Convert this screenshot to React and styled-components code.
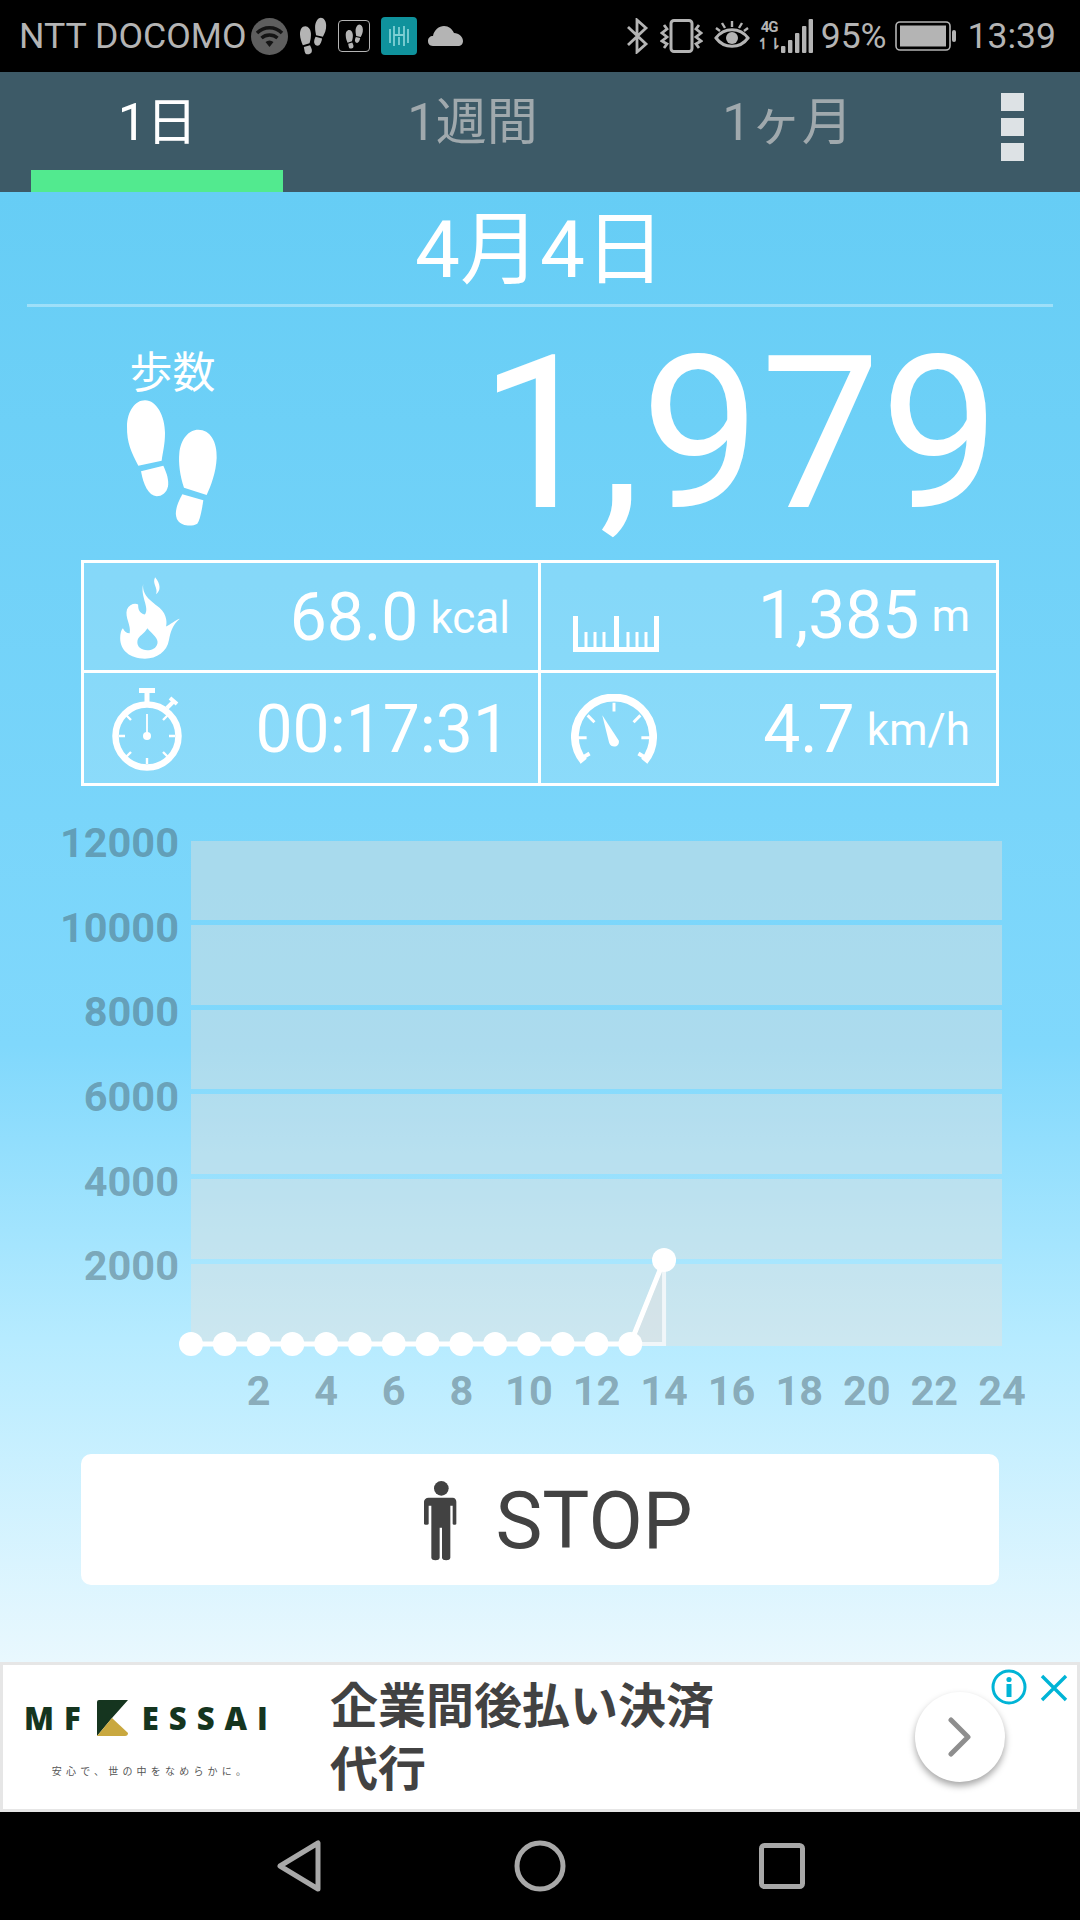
import styled, { createGlobalStyle } from "styled-components";

const GlobalStyle = createGlobalStyle`
  html, body {
    margin: 0;
    padding: 0;
    background: #000;
  }
  body {
    font-family: Roboto, "Noto Sans CJK JP", sans-serif;
  }
`;

const Y_LABELS = [
  { text: "12000", y: 856 },
  { text: "10000", y: 941 },
  { text: "8000", y: 1025 },
  { text: "6000", y: 1110 },
  { text: "4000", y: 1195 },
  { text: "2000", y: 1279 },
];
const GRID_BANDS = [
  { y: 840, h: 79 },
  { y: 924, h: 80 },
  { y: 1009, h: 79 },
  { y: 1093, h: 80 },
  { y: 1178, h: 80 },
  { y: 1263, h: 82 },
];
const HOUR_X = (h) => 191 + h * 33.79;
const X_LABELS = [2, 4, 6, 8, 10, 12, 14, 16, 18, 20, 22, 24];
const FLAT_HOURS = [0, 1, 2, 3, 4, 5, 6, 7, 8, 9, 10, 11, 12, 13];

const App = () => {
  return (
    <Screen>
      <GlobalStyle />
      <StatusBar>
        <Carrier>NTT DOCOMO</Carrier>
        <WifiIcon />
        <FeetIcon size={38} color="#b4b4b4" flip />
        <BoxedFeet>
          <FeetIcon size={25} color="#b4b4b4" flip />
        </BoxedFeet>
        <TealApp />
        <CloudIcon />
        <StatusRight>
          <BluetoothIcon />
          <VibrateIcon />
          <EyeIcon />
          <SignalIcon />
          <BatteryLevel>95%</BatteryLevel>
          <BatteryIcon />
          <StatusText>13:39</StatusText>
        </StatusRight>
      </StatusBar>

      <TabBar>
        <Tab $active>1日</Tab>
        <Tab>1週間</Tab>
        <Tab>1ヶ月</Tab>
        <MenuButton>
          <MenuDot />
          <MenuDot />
          <MenuDot />
        </MenuButton>
      </TabBar>

      <Main>
        <DateTitle>4月4日</DateTitle>
        <StepsRow>
          <StepsLabel>
            <span>歩数</span>
            <FeetIcon size={130} color="#fff" />
          </StepsLabel>
          <StepsCount>1,979</StepsCount>
        </StepsRow>

        <StatsTable>
          <StatCell>
            <FlameIcon />
            <StatValue>
              68.0<StatUnit>kcal</StatUnit>
            </StatValue>
          </StatCell>
          <StatCell $right>
            <RulerIcon />
            <StatValue $up>
              1,385<StatUnit>m</StatUnit>
            </StatValue>
          </StatCell>
          <StatCell $bottom>
            <TimerIcon />
            <StatValue>00:17:31</StatValue>
          </StatCell>
          <StatCell $right $bottom>
            <GaugeIcon />
            <StatValue>
              4.7<StatUnit>km/h</StatUnit>
            </StatValue>
          </StatCell>
        </StatsTable>

        <Chart viewBox="0 810 1080 620">
          {GRID_BANDS.map((b) => (
            <PlotBand key={b.y} x="191" y={b.y} width="811" height={b.h} />
          ))}
          {Y_LABELS.map((l) => (
            <AxisLabel key={l.text} x="179" y={l.y} textAnchor="end">
              {l.text}
            </AxisLabel>
          ))}
          {X_LABELS.map((h) => (
            <AxisLabel key={h} x={HOUR_X(h)} y="1404" textAnchor="middle">
              {h}
            </AxisLabel>
          ))}
          <path
            d={`M${HOUR_X(13)} 1343 L${HOUR_X(14)} 1259 V1343 Z`}
            fill="rgba(225,225,225,.45)"
            stroke="#f0f6f9"
            strokeWidth="4"
          />
          <polyline
            points={`${HOUR_X(0)},1343 ${HOUR_X(13)},1343 ${HOUR_X(14)},1259`}
            fill="none"
            stroke="#fff"
            strokeWidth="5"
          />
          {FLAT_HOURS.map((h) => (
            <circle key={h} cx={HOUR_X(h)} cy="1343" r="12" fill="#fff" />
          ))}
          <circle cx={HOUR_X(14)} cy="1259" r="12" fill="#fff" />
        </Chart>

        <StopButton>
          <PersonIcon />
          STOP
        </StopButton>
      </Main>

      <AdBanner>
        <AdLogo>
          <LogoRow>
            <span>MF</span>
            <KessaiMark />
            <span>ESSAI</span>
          </LogoRow>
          <LogoTagline>安心で、世の中をなめらかに。</LogoTagline>
        </AdLogo>
        <AdHeadline>
          企業間後払い決済
          <br />
          代行
        </AdHeadline>
        <AdInfo>
          <svg width="36" height="36" viewBox="0 0 36 36">
            <circle cx="18" cy="18" r="16" fill="none" stroke="#00b4d6" strokeWidth="3" />
            <circle cx="18" cy="10.5" r="2.6" fill="#00b4d6" />
            <rect x="15.5" y="15" width="5" height="13" fill="#00b4d6" />
          </svg>
        </AdInfo>
        <AdClose>
          <svg width="28" height="28" viewBox="0 0 28 28">
            <path d="M2 2 L26 26 M26 2 L2 26" stroke="#00b4d6" strokeWidth="3.4" fill="none" />
          </svg>
        </AdClose>
        <AdArrow>
          <svg width="24" height="40" viewBox="0 0 24 40">
            <path d="M3 3 L20 20 L3 37" stroke="#8e8e8e" strokeWidth="5" strokeLinecap="round" strokeLinejoin="round" fill="none" />
          </svg>
        </AdArrow>
      </AdBanner>

      <NavBar>
        <svg width="44" height="52" viewBox="0 0 44 52">
          <path d="M3 26 L41 3 V49 Z" fill="none" stroke="#a8a8a8" strokeWidth="5" strokeLinejoin="round" />
        </svg>
        <svg width="52" height="52" viewBox="0 0 52 52">
          <circle cx="26" cy="26" r="23" fill="none" stroke="#a8a8a8" strokeWidth="5" />
        </svg>
        <svg width="46" height="46" viewBox="0 0 46 46">
          <rect x="2.5" y="2.5" width="41" height="41" rx="3" fill="none" stroke="#a8a8a8" strokeWidth="5" />
        </svg>
      </NavBar>
    </Screen>
  );
};

/* drawn icons */

const FeetSvg = styled.svg`
  flex: none;
  transform: ${(p) => (p.$flip ? "scaleX(-1)" : "none")};
`;

const FeetIcon = ({ size, color, flip }) => (
  <FeetSvg $flip={flip} width={size * (285 / 390)} height={size} viewBox="195 205 285 390" fill={color}>
    <path d="M235 408 C215 370 200 340 201 290 C202 245 225 212 255 212 C290 212 315 260 315 310 C315 345 308 370 305 393 Z" />
    <path d="M243 425 L310 408 C320 430 327 450 324 470 C320 490 305 500 290 500 C265 498 250 465 243 425 Z" />
    <path d="M372 474 C360 440 355 400 358 370 C362 330 385 300 415 300 C450 300 472 335 470 385 C468 430 452 470 440 496 Z" />
    <path d="M367 494 L430 512 C425 545 420 570 412 582 C395 592 365 590 352 570 C342 550 350 525 367 494 Z" />
  </FeetSvg>
);

const WifiIcon = () => (
  <svg width="37" height="37" viewBox="0 0 37 37">
    <circle cx="18.5" cy="18.5" r="18.5" fill="#5e5e5e" />
    <path d="M6 15 C13 8 24 8 31 15 M10.5 20 C15 16 22 16 26.5 20" fill="none" stroke="#141414" strokeWidth="3.4" />
    <path d="M14.5 24 C17 22 20 22 22.5 24 L18.5 29 Z" fill="#141414" />
  </svg>
);

const TealApp = () => (
  <svg width="36" height="38" viewBox="0 0 36 38">
    <rect width="36" height="38" rx="4" fill="#0f929c" />
    <path d="M9 12 V26 M13 9 V29 M18 20 V28 M18 10 V17 M23 9 V29 M27 12 V26 M13 18 H23" fill="none" stroke="#7fd0d4" strokeWidth="1.8" />
  </svg>
);

const CloudIcon = () => (
  <svg width="35" height="20" viewBox="0 0 35 20">
    <path
      d="M5 20 C1 20 0 17 0 15 C0 12 2 10 5 10 C6 4 11 0 16 0 C21 0 24 3 26 7 C31 7 35 11 35 15 C35 18 33 20 30 20 Z"
      fill="#b4b4b4"
    />
  </svg>
);

const BluetoothIcon = () => (
  <svg width="23" height="36" viewBox="0 0 23 36">
    <path d="M2 9 L20 26 L11 34 V2 L20 10 L2 27" fill="none" stroke="#b4b4b4" strokeWidth="2.8" />
  </svg>
);

const VibrateIcon = () => (
  <svg width="43" height="34" viewBox="0 0 43 34">
    <rect x="11" y="1.5" width="21" height="31" rx="3" fill="none" stroke="#b4b4b4" strokeWidth="3" />
    <path
      d="M4 6 L7 10 L2 14 L7 18 L2 22 L7 25 L4 29 M39 6 L36 10 L41 14 L36 18 L41 22 L36 25 L39 29"
      fill="none"
      stroke="#b4b4b4"
      strokeWidth="2.8"
    />
  </svg>
);

const EyeIcon = () => (
  <svg width="36" height="32" viewBox="0 0 36 32">
    <path d="M2 18 C10 7 26 7 34 18 C26 29 10 29 2 18 Z" fill="none" stroke="#b4b4b4" strokeWidth="3" />
    <circle cx="18" cy="18" r="6" fill="#b4b4b4" />
    <path d="M18 1 V7 M8 3 L11 8 M28 3 L25 8 M2 8 L6 11 M34 8 L30 11" stroke="#b4b4b4" strokeWidth="2.4" />
  </svg>
);

const SignalIcon = () => (
  <SignalBox>
    <FourG>
      <span>4G</span>
      <span>↿⇂</span>
    </FourG>
    <svg width="32" height="34" viewBox="0 0 32 34">
      <rect x="0" y="27" width="4.4" height="7" rx="1" fill="#b4b4b4" />
      <rect x="7" y="21" width="4.4" height="13" rx="1" fill="#b4b4b4" />
      <rect x="14" y="14" width="4.4" height="20" rx="1" fill="#b4b4b4" />
      <rect x="21" y="7" width="4.4" height="27" rx="1" fill="#b4b4b4" />
      <rect x="27.6" y="0" width="4.4" height="34" rx="1" fill="#b4b4b4" />
    </svg>
  </SignalBox>
);

const BatteryIcon = () => (
  <svg width="62" height="30" viewBox="0 0 62 30">
    <rect x="1" y="1" width="54" height="28" rx="4" fill="none" stroke="#b4b4b4" strokeWidth="1.6" />
    <rect x="5" y="4.5" width="46" height="21" fill="#b4b4b4" />
    <rect x="57" y="9" width="4" height="12" rx="2" fill="#b4b4b4" />
  </svg>
);

const FlameIcon = () => (
  <svg width="62" height="82" viewBox="150 84 180 242" fill="#fff" fillRule="evenodd">
    <path d="M220 105 C215 140 250 160 268 175 C292 195 290 225 287 230 C300 225 315 210 328 207 C305 225 300 250 296 270 C290 305 260 325 225 325 C180 325 152 300 152 265 C152 250 155 240 160 235 C165 245 170 250 180 250 C185 225 165 205 172 180 C178 165 195 160 205 165 C205 180 208 190 225 195 C240 175 210 140 220 105 Z M232 235 C250 255 265 265 262 280 C258 295 245 300 232 300 C215 300 200 290 203 272 C205 258 225 250 232 235 Z" />
    <path d="M255 85 C245 105 265 115 258 135 C272 125 272 105 255 85 Z" />
  </svg>
);

const TimerSvg = styled.svg`
  margin-left: -7px;
`;

const TimerIcon = () => (
  <TimerSvg width="70" height="84" viewBox="0 0 70 84">
    <circle cx="35" cy="48" r="31.5" fill="none" stroke="#fff" strokeWidth="6.5" />
    <path d="M27 2.5 H43 M35 2 V17" stroke="#fff" strokeWidth="5" fill="none" />
    <path d="M55 20 L62 13 M58 10 L65 16" stroke="#fff" strokeWidth="4" fill="none" />
    <path d="M35 26 V48" stroke="#fff" strokeWidth="1.8" />
    <circle cx="35" cy="48" r="4" fill="#fff" />
    <path
      d="M35 70 V76 M13 48 H7 M57 48 H63 M19 32 L14 27 M51 32 L56 27 M19 64 L14 69 M51 64 L56 69"
      stroke="#fff"
      strokeWidth="2.4"
    />
  </TimerSvg>
);

const RulerSvg = styled.svg`
  margin-top: 32px;
`;

const RulerIcon = () => (
  <RulerSvg width="86" height="36" viewBox="0 0 86 36" fill="#fff">
    <rect x="0" y="31" width="86" height="5" />
    <rect x="0" y="0" width="5" height="33" />
    <rect x="81" y="0" width="5" height="33" />
    <rect x="41" y="0" width="5" height="33" />
    <rect x="11.5" y="16" width="3" height="16" />
    <rect x="20.5" y="16" width="3" height="16" />
    <rect x="29.5" y="16" width="3" height="16" />
    <rect x="53.5" y="16" width="3" height="16" />
    <rect x="62.5" y="16" width="3" height="16" />
    <rect x="71.5" y="16" width="3" height="16" />
  </RulerSvg>
);

const GaugeSvg = styled.svg`
  margin-left: -2px;
`;

const GaugeIcon = () => (
  <GaugeSvg width="86" height="72" viewBox="0 0 88 72">
    <path d="M13 68 A40 40 0 1 1 75 68" fill="none" stroke="#fff" strokeWidth="8" />
    <path d="M9 66 L19 60 M79 66 L69 60" stroke="#fff" strokeWidth="4" />
    <path d="M44 8 V17 M17 21 L24 28 M71 21 L64 28 M7 44 H16 M81 44 H72" stroke="#fff" strokeWidth="3" />
    <path d="M32 21 L39 49 C41 55 50 54 49 47 Z" fill="#fff" />
  </GaugeSvg>
);

const PersonIcon = () => (
  <svg width="34" height="80" viewBox="134 58 100 240" fill="#424242">
    <circle cx="188" cy="80" r="22" />
    <path d="M150 108 H222 C229 108 233 113 233 120 V186 C233 190 222 190 222 186 V132 H215 V288 C215 298 190 298 190 288 V198 H183 V288 C183 298 158 298 158 288 V132 H150 V186 C150 190 136 190 136 186 V120 C136 113 142 108 150 108 Z" />
  </svg>
);

const MarkSvg = styled.svg`
  margin: 0 5px 0 -3px;
`;

const KessaiMark = () => (
  <MarkSvg width="31" height="36" viewBox="0 0 31 36">
    <path d="M0 2 Q0 0 2 0 H31 L15 18 L0 36 Z" fill="#15351f" />
    <path d="M0 36 L15 18 L31 33 Q31 36 28 36 Z" fill="#c9a83f" />
  </MarkSvg>
);

/* layout */

const Screen = styled.div`
  width: 1080px;
  height: 1920px;
  display: flex;
  flex-direction: column;
  overflow: hidden;
`;

const StatusBar = styled.header`
  height: 72px;
  flex: none;
  background: #000;
  display: flex;
  align-items: center;
  gap: 11px;
  padding: 0 24px 0 19px;
  color: #b4b4b4;
`;

const Carrier = styled.span`
  font-size: 35.7px;
  margin-right: -6px;
`;

const BoxedFeet = styled.span`
  width: 32px;
  height: 32px;
  box-sizing: border-box;
  border: 1.5px solid #b4b4b4;
  border-radius: 4px;
  display: flex;
  align-items: center;
  justify-content: center;
`;

const StatusRight = styled.div`
  margin-left: auto;
  display: flex;
  align-items: center;
  gap: 11px;
`;

const StatusText = styled.span`
  font-size: 35.5px;
`;

const BatteryLevel = styled(StatusText)`
  margin-right: -3px;
`;

const SignalBox = styled.span`
  display: flex;
  align-items: flex-end;
  gap: 3px;
  margin-right: -3px;
`;

const FourG = styled.span`
  display: flex;
  flex-direction: column;
  align-items: center;
  font-size: 15px;
  line-height: 17px;
  font-weight: 700;
  width: 17px;
  letter-spacing: -1px;
`;

const TabBar = styled.nav`
  height: 120px;
  flex: none;
  background: #3d5a67;
  display: flex;
`;

const Tab = styled.div`
  width: 315px;
  position: relative;
  display: flex;
  justify-content: center;
  padding-top: 20px;
  box-sizing: border-box;
  font-size: 51px;
  line-height: 62px;
  color: ${(p) => (p.$active ? "#fff" : "#a0a9ad")};

  &::after {
    content: "";
    display: ${(p) => (p.$active ? "block" : "none")};
    position: absolute;
    left: 31px;
    right: 32px;
    bottom: 0;
    height: 22px;
    background: #52ea8f;
  }
`;

const MenuButton = styled.div`
  flex: 1;
  display: flex;
  flex-direction: column;
  align-items: center;
  gap: 7px;
  padding-top: 21px;
  box-sizing: border-box;
`;

const MenuDot = styled.span`
  width: 23px;
  height: 18px;
  background: #dde2e5;
`;

const Main = styled.main`
  flex: 1;
  display: flex;
  flex-direction: column;
  background: linear-gradient(#66cdf5 0%, #80d8fc 58%, #b6ebff 78%, #e9f8fe 100%);
`;

const DateTitle = styled.h1`
  margin: 0 27px;
  height: 100px;
  padding-bottom: 12px;
  border-bottom: 3px solid rgba(255, 255, 255, 0.35);
  display: flex;
  align-items: center;
  justify-content: center;
  font-size: 80px;
  font-weight: 400;
  color: #fff;
`;

const StepsRow = styled.section`
  height: 253px;
  display: flex;
  align-items: flex-start;
  padding: 0 80px 0 125px;
`;

const StepsLabel = styled.div`
  width: 95px;
  display: flex;
  flex-direction: column;
  align-items: center;
  margin-top: 41px;
  color: #fff;
  font-size: 43px;
  line-height: 50px;
`;

const StepsCount = styled.div`
  margin-left: auto;
  font-size: 213px;
  font-weight: 400;
  line-height: 255px;
  color: #fff;
`;

const StatsTable = styled.section`
  margin: 0 81px;
  width: 918px;
  height: 226px;
  box-sizing: border-box;
  border: 3px solid #fff;
  display: grid;
  grid-template-columns: 454px 1fr;
  grid-template-rows: 107px 1fr;
  background: rgba(255, 255, 255, 0.14);
`;

const StatCell = styled.div`
  display: flex;
  align-items: center;
  justify-content: space-between;
  padding: 3px ${(p) => (p.$right ? "26px" : "28px")} 0 ${(p) => (p.$right ? "32px" : "35px")};
  border-left: ${(p) => (p.$right ? "3px solid #fff" : "none")};
  border-top: ${(p) => (p.$bottom ? "3px solid #fff" : "none")};
  color: #fff;
`;

const StatValue = styled.div`
  font-size: 66px;
  line-height: 80px;
  position: relative;
  top: ${(p) => (p.$up ? "-2px" : "0")};
  white-space: nowrap;
`;

const StatUnit = styled.span`
  font-size: 44px;
  margin-left: 12px;
  vertical-align: 7px;
`;

const Chart = styled.svg`
  display: block;
  width: 1080px;
  height: 620px;
  margin-top: 25px;
  flex: none;
`;

const PlotBand = styled.rect`
  fill: rgba(237, 225, 218, 0.4);
`;

const AxisLabel = styled.text`
  font-family: Roboto, sans-serif;
  font-size: 41.5px;
  font-weight: 700;
  fill: rgba(69, 90, 100, 0.46);
`;

const StopButton = styled.button`
  margin: 23px 81px 0;
  height: 131px;
  border: none;
  border-radius: 10px;
  background: #fff;
  display: flex;
  align-items: center;
  justify-content: center;
  gap: 38px;
  padding: 3px 0 0 36px;
  font-family: inherit;
  font-size: 79px;
  color: #424242;
`;

const AdBanner = styled.aside`
  height: 150px;
  flex: none;
  box-sizing: border-box;
  position: relative;
  background: #fff;
  border: 3px solid #e6e6e6;
  display: flex;
  align-items: center;
`;

const AdLogo = styled.div`
  width: 327px;
  flex: none;
  display: flex;
  flex-direction: column;
  align-items: center;
  padding-right: 31px;
  box-sizing: border-box;
  color: #15351f;
`;

const LogoRow = styled.div`
  display: flex;
  align-items: center;
  gap: 9px;
  font-family: "Open Sans", Roboto, sans-serif;
  font-size: 31px;
  font-weight: 800;
  letter-spacing: 10px;
  margin-bottom: 24px;
`;

const LogoTagline = styled.div`
  font-size: 10px;
  letter-spacing: 4.2px;
  color: #555;
`;

const AdHeadline = styled.div`
  font-size: 48px;
  font-weight: 700;
  line-height: 63px;
  padding-top: 2px;
  color: #424242;
`;

const AdInfo = styled.div`
  position: absolute;
  right: 50px;
  top: 4px;
  line-height: 0;
`;

const AdClose = styled.div`
  position: absolute;
  right: 9px;
  top: 9px;
  line-height: 0;
`;

const AdArrow = styled.div`
  position: absolute;
  left: 912px;
  top: 27px;
  width: 90px;
  height: 90px;
  border-radius: 50%;
  background: #fff;
  box-shadow: 0 4px 7px rgba(0, 0, 0, 0.35);
  display: flex;
  align-items: center;
  justify-content: center;
`;

const NavBar = styled.footer`
  height: 108px;
  flex: none;
  background: #000;
  display: flex;
  align-items: center;
  padding: 0 0 0 277px;
  gap: 193px;
`;

export default App;
